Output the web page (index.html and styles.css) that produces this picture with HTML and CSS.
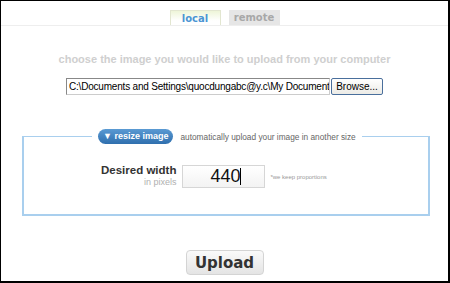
FILE: index.html
```html
<!DOCTYPE html>
<html lang="en">
<head>
    <meta charset="UTF-8">
    <title>Upload image</title>
    <link rel="stylesheet" href="styles.css">
</head>
<body>
    <div class="frame">
        <div class="tabs">
            <div class="tab active">local</div>
            <div class="tab">remote</div>
        </div>

        <p class="hint">choose the image you would like to upload from your computer</p>

        <div class="file-row">
            <div class="file-path">C:\Documents and Settings\quocdungabc@y.c\My Document</div>
            <div class="browse">Browse...</div>
        </div>

        <fieldset class="resize">
            <legend>
                <span class="pill">&#9660; resize image</span>
                <span class="legend-note">automatically upload your image in another size</span>
            </legend>
            <div class="width-row">
                <div class="width-label">
                    <strong>Desired width</strong>
                    <span>in pixels</span>
                </div>
                <div class="width-input">440<span class="caret"></span></div>
                <div class="width-note">*we keep proportions</div>
            </div>
        </fieldset>

        <div class="actions">
            <button class="upload">Upload</button>
        </div>
    </div>
</body>
</html>
```

FILE: styles.css
```css
body {
    margin: 0;
    font-family: 'Liberation Sans', Arial, sans-serif;
    background: #fff;
}
.frame {
    width: 450px;
    height: 283px;
    box-sizing: border-box;
    border-left: 1px solid #000;
    border-top: 1px solid #000;
    border-right: 2px solid #000;
    border-bottom: 2px solid #000;
    display: flex;
    flex-direction: column;
}
.tabs {
    display: flex;
    justify-content: center;
    gap: 8px;
    padding-top: 9px;
    border-bottom: 1px solid #eee;
}
.tab {
    width: 51px;
    height: 15px;
    box-sizing: border-box;
    text-align: center;
    font-family: 'DejaVu Sans', Verdana, sans-serif;
    font-weight: bold;
    font-size: 10px;
    line-height: 15px;
    color: #a8a8a8;
    background: #e6e6e6;
}
.tab.active {
    color: #4b95d3;
    background: linear-gradient(#eef5d8, #fff 70%);
    border: 1px solid #e2e6d0;
    border-bottom: none;
}
.hint {
    margin: 27px 0 0;
    text-align: center;
    font-weight: bold;
    font-size: 11px;
    color: #cfcfcf;
}
.file-row {
    display: flex;
    justify-content: center;
    margin-top: 13px;
}
.file-path {
    width: 264px;
    height: 17px;
    box-sizing: border-box;
    border: 1px solid;
    border-color: #888 #ccc #ccc #888;
    font-size: 10px;
    letter-spacing: -0.2px;
    line-height: 15px;
    padding-left: 2px;
    white-space: nowrap;
    overflow: hidden;
    color: #000;
}
.browse {
    margin-left: 1px;
    width: 52px;
    height: 17px;
    box-sizing: border-box;
    border: 1px solid #4a6f9c;
    border-radius: 2px;
    background: linear-gradient(#fff, #ecebe6);
    font-size: 10px;
    line-height: 15px;
    text-align: center;
    color: #000;
}
.resize {
    margin: 34px 18px 0 21px;
    padding: 21px 0 0;
    border: 2px solid #a9cfee;
    border-width: 1px 2px 2px 2px;
    height: 87px;
    box-sizing: border-box;
}
.resize legend {
    margin-left: 68px;
    padding: 0 6px;
    display: flex;
    align-items: center;
    gap: 7px;
}
.pill {
    display: inline-block;
    padding: 0 5px;
    height: 15px;
    line-height: 15px;
    border-radius: 8px;
    background: linear-gradient(#5a9ad3, #2f6fae);
    color: #fff;
    font-weight: bold;
    font-size: 9px;
}
.legend-note {
    font-size: 8.3px;
    color: #666;
}
.width-row {
    display: flex;
    align-items: center;
    margin-left: 77px;
}
.width-label {
    display: flex;
    flex-direction: column;
    align-items: flex-end;
    margin-right: 6px;
    margin-top: -2px;
}
.width-label strong {
    font-size: 11.5px;
    color: #333;
}
.width-label span {
    font-size: 9px;
    color: #b0b0b0;
    margin-top: 1px;
}
.width-input {
    width: 83px;
    height: 23px;
    box-sizing: border-box;
    border: 1px solid #d6d6d6;
    background: linear-gradient(#fff, #f3f3f3);
    font-size: 18px;
    line-height: 21px;
    padding-left: 27px;
    color: #111;
}
.caret {
    display: inline-block;
    width: 1px;
    height: 17px;
    background: #000;
    vertical-align: -3px;
}
.width-note {
    margin-left: 5px;
    margin-top: 1px;
    font-size: 6px;
    color: #999;
}
.actions {
    display: flex;
    justify-content: center;
    margin-top: 34px;
}
.upload {
    width: 78px;
    height: 25px;
    border: 1px solid #d4d4d4;
    border-radius: 4px;
    background: linear-gradient(#fafafa, #e4e4e4);
    font-family: 'DejaVu Sans', Verdana, sans-serif;
    font-weight: bold;
    font-size: 15px;
    color: #333;
    padding: 0;
}
```
